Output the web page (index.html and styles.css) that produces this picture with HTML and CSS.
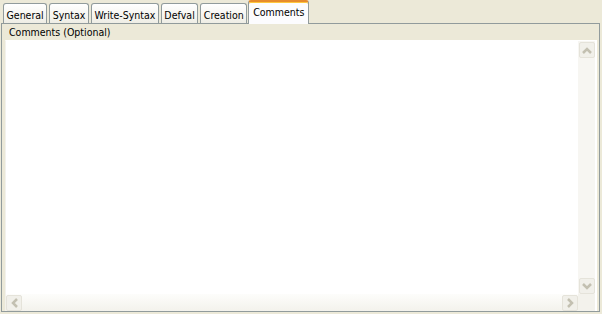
FILE: index.html
```html
<!DOCTYPE html>
<html>
<head>
<meta charset="utf-8">
<link rel="stylesheet" href="styles.css">
</head>
<body>
<div class="window">
  <div class="tabs">
    <div class="tab">General</div>
    <div class="tab">Syntax</div>
    <div class="tab">Write-Syntax</div>
    <div class="tab">Defval</div>
    <div class="tab">Creation</div>
    <div class="tab active">Comments</div>
  </div>
  <div class="panel">
    <div class="label">Comments (Optional)</div>
    <div class="editor">
      <div class="text"></div>
      <div class="vscroll">
        <div class="sbtn"><svg width="10" height="7" viewBox="0 0 10 7"><polyline points="1,6 5,2 9,6" fill="none" stroke="#c3c0b1" stroke-width="2.5"/></svg></div>
        <div class="track"></div>
        <div class="sbtn"><svg width="10" height="7" viewBox="0 0 10 7"><polyline points="1,1 5,5 9,1" fill="none" stroke="#c3c0b1" stroke-width="2.5"/></svg></div>
      </div>
      <div class="hscroll">
        <div class="sbtn"><svg width="7" height="10" viewBox="0 0 7 10"><polyline points="6,1 2,5 6,9" fill="none" stroke="#c3c0b1" stroke-width="2.5"/></svg></div>
        <div class="track"></div>
        <div class="sbtn"><svg width="7" height="10" viewBox="0 0 7 10"><polyline points="1,1 5,5 1,9" fill="none" stroke="#c3c0b1" stroke-width="2.5"/></svg></div>
      </div>
      <div class="corner"></div>
    </div>
  </div>
</div>
</body>
</html>
```
FILE: styles.css
```css
html, body {
  margin: 0;
  padding: 0;
  background: #ece9d8;
}
body {
  width: 602px;
  height: 314px;
  overflow: hidden;
  font-family: "DejaVu Sans Condensed", "Liberation Sans", sans-serif;
  font-size: 10.5px;
  color: #000;
}
.window {
  display: flex;
  flex-direction: column;
  height: 314px;
}
.tabs {
  display: flex;
  align-items: flex-end;
  height: 23px;
  padding-left: 3px;
  position: relative;
  z-index: 2;
}
.tab {
  box-sizing: border-box;
  height: 20px;
  margin-right: 2px;
  padding: 5px 2.5px 0;
  border: 1px solid #919b9c;
  border-bottom: none;
  border-radius: 3px 3px 0 0;
  background: linear-gradient(#ffffff, #f6f5f0 60%, #eeede5);
  white-space: nowrap;
  line-height: 12px;
}
.tab.active {
  height: 24px;
  margin-left: -1px;
  margin-bottom: -1px;
  padding: 4px 4px 0;
  background: #fcfcfe;
  border-top: 2px solid #e68b2c;
  box-shadow: inset 0 1px 0 #ffc73c;
  border-radius: 3px 3px 0 0;
}
.panel {
  flex: 1;
  display: flex;
  flex-direction: column;
  margin: 0 2px 2px 1px;
  border: 1px solid #919b9c;
  padding: 0 2px 0 3px;
}
.label {
  height: 16px;
  line-height: 17px;
  padding-left: 4px;
}
.editor {
  flex: 1;
  display: grid;
  grid-template-columns: 1fr 17px;
  grid-template-rows: 1fr 17px;
  background: #fff;
  border-top: 1px solid #fff;
  border-left: 1px solid #f3f2ec;
  padding-right: 2px;
}
.text {
  background: #fff;
}
.vscroll {
  display: flex;
  flex-direction: column;
  background: #f7f6f2;
  padding-top: 1px;
}
.hscroll {
  display: flex;
  background: linear-gradient(#fdfdfb, #f3f2ec);
}
.track {
  flex: 1;
}
.sbtn {
  box-sizing: border-box;
  width: 16px;
  height: 16px;
  border: 1px solid #e5e3da;
  border-radius: 2px;
  background: #f1f0ea;
  display: flex;
  align-items: center;
  justify-content: center;
}
.vscroll .sbtn {
  margin-left: 1px;
}
.hscroll .sbtn {
  margin-top: 1px;
}
.corner {
  background: #f3f2ec;
}
```
